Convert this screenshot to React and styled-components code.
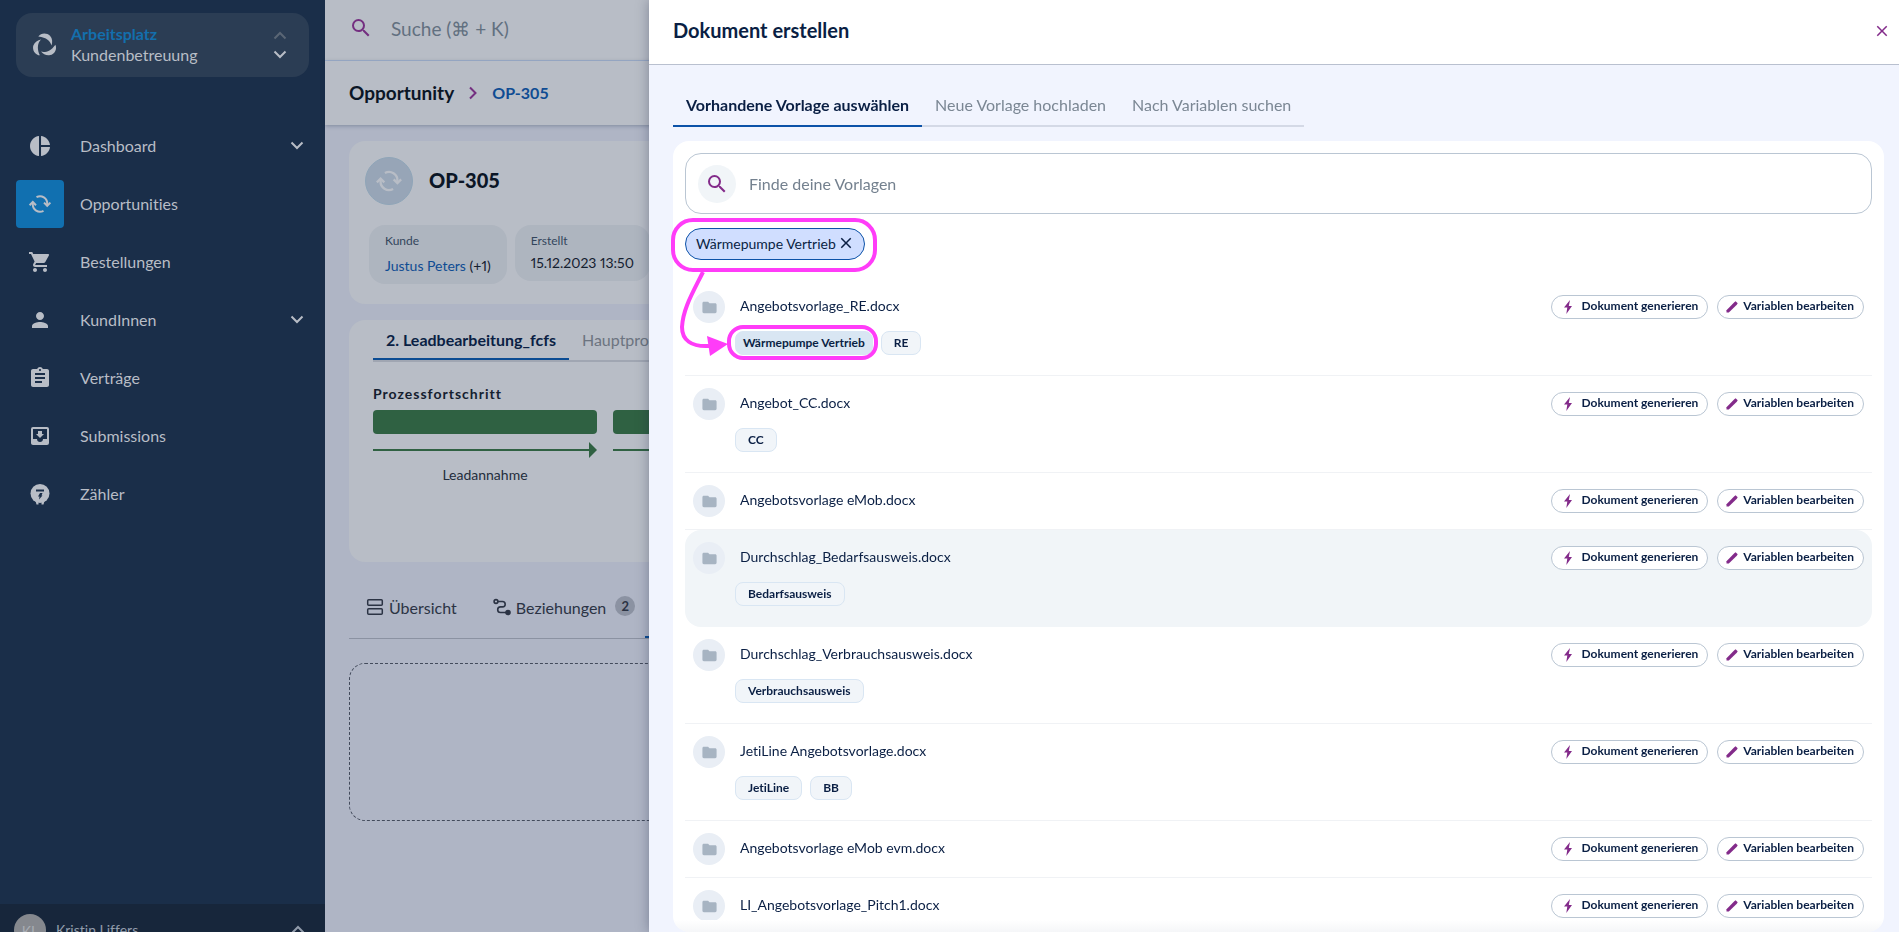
import React, { useState } from "react";
import styled, { createGlobalStyle, css } from "styled-components";
import {
  MdPieChart,
  MdShoppingCart,
  MdPerson,
  MdAssignment,
  MdSearch,
  MdFolder,
  MdClose,
} from "react-icons/md";

const GlobalStyle = createGlobalStyle`
  * {
    box-sizing: border-box;
  }

  body {
    margin: 0;
    overflow: hidden;
    font-family: Lato, "Open Sans", sans-serif;
    font-size: 16px;
    font-variant-ligatures: none;
    color: #0a1f44;
    background: #afb5c5;
  }

  button,
  input {
    font-family: inherit;
    font-variant-ligatures: inherit;
    color: inherit;
  }

  a {
    text-decoration: none;
  }
`;

const navItems = [
  { label: "Dashboard", icon: <MdPieChart />, more: true },
  { label: "Opportunities", icon: <CycleIcon size={24} />, active: true },
  { label: "Bestellungen", icon: <MdShoppingCart /> },
  { label: "KundInnen", icon: <MdPerson />, more: true },
  { label: "Verträge", icon: <MdAssignment /> },
  { label: "Submissions", icon: <InboxIcon /> },
  { label: "Zähler", icon: <MeterIcon /> },
];

const templates = [
  { name: "Angebotsvorlage_RE.docx", tags: ["Wärmepumpe Vertrieb", "RE"] },
  { name: "Angebot_CC.docx", tags: ["CC"] },
  { name: "Angebotsvorlage eMob.docx", tags: [] },
  { name: "Durchschlag_Bedarfsausweis.docx", tags: ["Bedarfsausweis"], hovered: true },
  { name: "Durchschlag_Verbrauchsausweis.docx", tags: ["Verbrauchsausweis"] },
  { name: "JetiLine Angebotsvorlage.docx", tags: ["JetiLine", "BB"] },
  { name: "Angebotsvorlage eMob evm.docx", tags: [] },
  { name: "LI_Angebotsvorlage_Pitch1.docx", tags: [] },
];

const drawerTabs = ["Vorhandene Vorlage auswählen", "Neue Vorlage hochladen", "Nach Variablen suchen"];

const activeFilter = "Wärmepumpe Vertrieb";

function CycleIcon({ size }) {
  return (
    <svg width={size} height={size} viewBox="0 0 24 24" fill="none" stroke="currentColor" strokeWidth="2">
      <path d="M8.5 5.2A7.2 7.2 0 0 1 19.2 12v1.2" />
      <path d="M15.5 18.8A7.2 7.2 0 0 1 4.8 12v-1.2" />
      <path d="M16 10.6l3.2 3.2 3.2-3.2" />
      <path d="M1.6 13.2L4.8 10l3.2 3.2" />
    </svg>
  );
}

function InboxIcon() {
  return (
    <svg width="24" height="24" viewBox="0 0 24 24" fill="currentColor">
      <path d="M19 3H5a2 2 0 0 0-2 2v14c0 1.1.9 2 2 2h14a2 2 0 0 0 2-2V5a2 2 0 0 0-2-2zm0 12h-4c0 1.700-1.300 3-3 3s-3-1.300-3-3H5V5h14v10zm-3-5h-2V7h-4v3H8l4 4 4-4z" />
    </svg>
  );
}

function MeterIcon() {
  return (
    <svg width="24" height="24" viewBox="0 0 24 24">
      <circle cx="12" cy="11.5" r="9.5" fill="currentColor" />
      <path d="M7.5 19h3v3.500h-2zM13.500 19h3l-1 3.500h-2z" fill="currentColor" />
      <path d="M8 7.500h8v2H8zM12 11h2.500l-1 2.500h1L11 17.500l.5-3H10z" fill="#1a2e49" />
    </svg>
  );
}

const blade = "M6.300 4.500C9 .5 15 .5 18 3.800c2.600 3 2.600 6.500 1.500 9.700C18.500 9.500 14.500 5.200 6.300 4.500z";

function LogoIcon() {
  return (
    <svg width="26" height="26" viewBox="0 0 26 26" fill="currentColor">
      {[0, 120, 240].map((angle) => (
        <path key={angle} d={blade} transform={`rotate(${angle} 12.500 13.500)`} />
      ))}
    </svg>
  );
}

function Chevron({ dir = "down" }) {
  const paths = { down: "M1.500 3.500L7 9l5.500-5.500", up: "M1.500 9.500L7 4l5.500 5.500", right: "M4 1.500L9.500 7 4 12.500" };
  return (
    <svg width="14" height="14" viewBox="0 0 14 14" fill="none" stroke="currentColor" strokeWidth="2">
      <path d={paths[dir]} />
    </svg>
  );
}

function BoltIcon() {
  return (
    <svg width="16" height="16" viewBox="0 0 16 16" fill="currentColor">
      <path d="M10 1L4 8.600h3.300L6.300 15 12 7H8.800z" />
    </svg>
  );
}

function PencilIcon() {
  return (
    <svg width="12" height="12" viewBox="0 0 12 12" fill="currentColor">
      <path d="M.5 9.200L8.300 1.200 9.600.3 11.700 2.300 10.800 3.700 2.800 11.500H.5z" />
    </svg>
  );
}

function OverviewIcon() {
  return (
    <svg width="18" height="18" viewBox="0 0 18 18" fill="none" stroke="currentColor" strokeWidth="1.5">
      <rect x="1.7" y="1.7" width="14.6" height="5.6" rx="1" />
      <rect x="1.7" y="10.7" width="14.6" height="5.6" rx="1" />
    </svg>
  );
}

function RelationIcon() {
  return (
    <svg width="18" height="18" viewBox="0 0 18 18" fill="none" stroke="currentColor" strokeWidth="1.6">
      <circle cx="3" cy="3.5" r="1.9" />
      <path d="M5 3.500h4.500a2.700 2.700 0 0 1 0 5.400H7.500a2.800 2.800 0 0 0 0 5.600H13" />
      <circle cx="15" cy="14.5" r="2" fill="currentColor" />
    </svg>
  );
}

function Sidebar() {
  return (
    <SidebarContainer>
      <Workspace type="button">
        <LogoIcon />
        <WorkspaceText>
          <strong>Arbeitsplatz</strong>
          <span>Kundenbetreuung</span>
        </WorkspaceText>
        <WorkspaceArrows>
          <Chevron dir="up" />
          <Chevron />
        </WorkspaceArrows>
      </Workspace>
      <Nav>
        {navItems.map((item) => (
          <NavLink href="#" key={item.label}>
            <NavIcon $active={item.active}>{item.icon}</NavIcon>
            <NavLabel>{item.label}</NavLabel>
            {item.more && <Chevron />}
          </NavLink>
        ))}
      </Nav>
      <UserBar type="button">
        <Avatar>KL</Avatar>
        <NavLabel>Kristin Liffers</NavLabel>
        <Chevron dir="up" />
      </UserBar>
    </SidebarContainer>
  );
}

function Opportunity() {
  return (
    <Main>
      <TopBar>
        <MdSearch />
        <TopSearch type="search" aria-label="Suche" placeholder="Suche (⌘ + K)" />
      </TopBar>
      <Breadcrumb>
        <h1>Opportunity</h1>
        <Chevron dir="right" />
        <a href="#">OP-305</a>
      </Breadcrumb>
      <Content>
        <Card>
          <OpportunityHead>
            <OpportunityIcon>
              <CycleIcon size={28} />
            </OpportunityIcon>
            <h2>OP-305</h2>
          </OpportunityHead>
          <Facts>
            <Fact>
              <small>Kunde</small>
              <FactValue $tall>
                <a href="#">Justus Peters</a> (+1)
              </FactValue>
            </Fact>
            <Fact>
              <small>Erstellt</small>
              <FactValue>15.12.2023 13:50</FactValue>
            </Fact>
          </Facts>
        </Card>
        <ProcessCard>
          <ProcessTabs>
            <ProcessTab type="button" $active>2. Leadbearbeitung_fcfs</ProcessTab>
            <ProcessTab type="button">Hauptprozess</ProcessTab>
          </ProcessTabs>
          <h3>Prozessfortschritt</h3>
          <Steps>
            {["Leadannahme", "Qualifizierung"].map((step) => (
              <Step key={step}>
                <StepBar />
                <StepArrow />
                <span>{step}</span>
              </Step>
            ))}
          </Steps>
        </ProcessCard>
        <SectionTabs>
          <SectionTab type="button">
            <OverviewIcon /> Übersicht
          </SectionTab>
          <SectionTab type="button">
            <RelationIcon /> Beziehungen <Count>2</Count>
          </SectionTab>
          <SectionTab type="button" $active>Dokumente</SectionTab>
        </SectionTabs>
        <DropZone />
      </Content>
    </Main>
  );
}

function TemplateRow({ template }) {
  return (
    <Row $hovered={template.hovered}>
      <FolderCircle>
        <MdFolder />
      </FolderCircle>
      <RowBody>
        <FileName>{template.name}</FileName>
        {template.tags.length > 0 && (
          <Tags>
            {template.tags.map((tag) => (
              <Tag key={tag} $match={tag === activeFilter}>{tag}</Tag>
            ))}
          </Tags>
        )}
      </RowBody>
      <Actions>
        <PillButton type="button">
          <BoltIcon />
          <span>Dokument generieren</span>
        </PillButton>
        <PillButton type="button">
          <PencilIcon />
          <span>Variablen bearbeiten</span>
        </PillButton>
      </Actions>
    </Row>
  );
}

function DocumentDrawer() {
  const [tab, setTab] = useState(drawerTabs[0]);
  const [query, setQuery] = useState("");

  const visible = templates.filter((t) => t.name.toLowerCase().includes(query.toLowerCase()));

  return (
    <Drawer>
      <DrawerHeader>
        <h2>Dokument erstellen</h2>
        <CloseButton type="button" aria-label="Schließen">
          <MdClose />
        </CloseButton>
      </DrawerHeader>
      <DrawerBody>
        <DrawerTabs>
          {drawerTabs.map((name) => (
            <DrawerTab type="button" key={name} $active={name === tab} onClick={() => setTab(name)}>
              {name}
            </DrawerTab>
          ))}
        </DrawerTabs>
        <Panel>
          <SearchBox>
            <SearchCircle>
              <MdSearch />
            </SearchCircle>
            <input
              type="text"
              aria-label="Finde deine Vorlagen"
              placeholder="Finde deine Vorlagen"
              value={query}
              onChange={(e) => setQuery(e.target.value)}
            />
          </SearchBox>
          <FilterBar>
            <FilterChip type="button">
              {activeFilter}
              <MdClose />
            </FilterChip>
            <HintArrow viewBox="0 0 60 90">
              <path d="M33 2C22 24 13 39 12 57c0 13 9 20 27 19" fill="none" stroke="#ff3cf8" strokeWidth="4" />
              <path d="M37 66l21 8-18 12z" fill="#ff3cf8" />
            </HintArrow>
          </FilterBar>
          <List>
            {visible.map((template) => (
              <TemplateRow key={template.name} template={template} />
            ))}
          </List>
        </Panel>
      </DrawerBody>
    </Drawer>
  );
}

const App = () => (
  <Page>
    <GlobalStyle />
    <Sidebar />
    <Opportunity />
    <DocumentDrawer />
  </Page>
);

export default App;

const Page = styled.div`
  display: flex;
  height: 100vh;
  overflow: hidden;
`;

const SidebarContainer = styled.aside`
  display: flex;
  flex-direction: column;
  flex: 0 0 325px;
  height: calc(100vh + 24px);
  background: #1a2e49;
  color: #b8bdc6;
`;

const Workspace = styled.button`
  display: flex;
  align-items: center;
  gap: 13px;
  height: 64px;
  margin: 13px 16px 45px;
  padding: 0 22px 0 16px;
  border: none;
  border-radius: 16px;
  background: #2b3d54;
  font-size: 16px;
  text-align: left;
`;

const WorkspaceText = styled.span`
  display: flex;
  flex-direction: column;
  flex: 1;
  padding-bottom: 3px;
  line-height: 21px;

  strong {
    color: #136fad;
  }
`;

const WorkspaceArrows = styled.span`
  display: flex;
  flex-direction: column;
  gap: 5px;

  svg:first-child {
    color: #5a6675;
  }
`;

const Nav = styled.nav`
  display: flex;
  flex-direction: column;
  flex: 1;
  gap: 10px;
  padding: 0 16px;
`;

const NavLink = styled.a`
  display: flex;
  align-items: center;
  gap: 16px;
  padding-right: 5px;
  color: inherit;
`;

const NavIcon = styled.span`
  display: grid;
  place-items: center;
  width: 48px;
  height: 48px;
  border-radius: 4px;
  font-size: 24px;
  background: ${({ $active }) => ($active ? "#1170b0" : "transparent")};
`;

const NavLabel = styled.span`
  flex: 1;
  padding-bottom: 2px;
`;

const UserBar = styled.button`
  display: flex;
  align-items: center;
  gap: 10px;
  height: 52px;
  padding: 0 20px 0 14px;
  border: none;
  background: #17263b;
  color: #929cab;
  font-size: 14px;
  text-align: left;
`;

const Avatar = styled.span`
  display: grid;
  place-items: center;
  width: 32px;
  height: 32px;
  border-radius: 50%;
  background: #85888e;
  color: #a9adb4;
`;

const Main = styled.main`
  flex: 1;
  min-width: 0;
  background: #afb5c5;
`;

const TopBar = styled.div`
  display: flex;
  align-items: center;
  gap: 16px;
  height: 61px;
  padding: 0 24px 4px;
  border-bottom: 1px solid #9fb0cb;
  background: #b8bdc6;
  color: #742f80;
  font-size: 24px;
`;

const TopSearch = styled.input`
  flex: 1;
  border: none;
  background: transparent;
  font-size: 19px;

  &::placeholder {
    color: #627080;
  }
`;

const Breadcrumb = styled.div`
  display: flex;
  align-items: center;
  gap: 12px;
  height: 64px;
  padding: 0 24px;
  background: #b8bdc6;
  box-shadow: 0 1px 4px rgba(20, 40, 70, 0.3);
  color: #742f80;

  h1 {
    margin: 0;
    padding-bottom: 2px;
    color: #0b1626;
    font-size: 19px;
  }

  a {
    padding-bottom: 2px;
    color: #0f4c93;
    font-weight: 700;
  }
`;

const Content = styled.div`
  display: flex;
  flex-direction: column;
  padding: 16px 24px;
`;

const Card = styled.section`
  margin-bottom: 16px;
  padding: 16px 16px 20px;
  border-radius: 16px;
  background: #b8bdc6;
`;

const OpportunityHead = styled.div`
  display: flex;
  align-items: center;
  gap: 16px;
  margin-bottom: 20px;

  h2 {
    margin: 0;
    padding-bottom: 2px;
    color: #0b1626;
    font-size: 20px;
    font-weight: 900;
  }
`;

const OpportunityIcon = styled.span`
  display: grid;
  place-items: center;
  width: 48px;
  height: 48px;
  border: 1px solid #8fa5b8;
  border-radius: 50%;
  background: #97a5b7;
  color: #b8bdc6;
`;

const Facts = styled.div`
  display: flex;
  align-items: flex-start;
  gap: 8px;
  padding-left: 4px;
`;

const Fact = styled.div`
  padding: 8px 16px;
  border-radius: 16px;
  background: #aeb5bf;
  white-space: nowrap;

  small {
    display: block;
    color: #33455c;
    font-size: 12px;
    line-height: 16px;
  }
`;

const FactValue = styled.div`
  padding-top: ${({ $tall }) => ($tall ? "7px" : "4px")};
  color: #14202f;
  font-size: 14px;
  font-variant-numeric: proportional-nums;
  line-height: 20px;

  a {
    color: #0f4c93;
  }
`;

const ProcessCard = styled(Card)`
  min-height: 242px;
  margin-bottom: 24px;
  padding: 0 24px;

  h3 {
    margin: 22px 0 6px;
    color: #14202f;
    font-size: 14px;
    line-height: 20px;
    letter-spacing: 1px;
  }
`;

const ProcessTabs = styled.div`
  display: flex;
  height: 42px;
  border-bottom: 2px solid #a0a6b2;
`;

const ProcessTab = styled.button`
  height: 40px;
  padding: 0 13px;
  border: none;
  border-bottom: 2px solid ${({ $active }) => ($active ? "#0b4c93" : "transparent")};
  background: transparent;
  color: ${({ $active }) => ($active ? "#0a1f44" : "#6c7480")};
  font-size: 16px;
  font-weight: ${({ $active }) => ($active ? 700 : 400)};
  white-space: nowrap;
`;

const Steps = styled.div`
  display: flex;
  gap: 16px;
`;

const Step = styled.div`
  display: flex;
  flex-direction: column;
  flex: 0 0 224px;
  color: #232d3c;
  font-size: 14px;
  line-height: 18px;
  text-align: center;
`;

const StepBar = styled.div`
  height: 24px;
  border-radius: 4px;
  background: #2f6142;
`;

const StepArrow = styled.div`
  display: flex;
  align-items: center;
  height: 16px;
  margin: 8px 0;

  &::before {
    content: "";
    flex: 1;
    height: 2px;
    background: #2f6142;
  }

  &::after {
    content: "";
    border: 8px solid transparent;
    border-right: none;
    border-left-color: #2f6142;
  }
`;

const SectionTabs = styled.div`
  display: flex;
  height: 53px;
  margin-bottom: 24px;
  border-bottom: 1px solid #8b92a2;
`;

const SectionTab = styled.button`
  display: flex;
  align-items: center;
  gap: 5px;
  height: 52px;
  padding: 0 19px 8px 17px;
  border: none;
  border-bottom: 2px solid ${({ $active }) => ($active ? "#0b4c93" : "transparent")};
  background: transparent;
  color: #2b3344;
  font-size: 16px;
`;

const Count = styled.span`
  display: grid;
  place-items: center;
  width: 20px;
  height: 20px;
  margin: 0 -9px 2px 4px;
  border-radius: 50%;
  background: #8b92a2;
  font-size: 13px;
  font-weight: 700;
`;

const DropZone = styled.div`
  height: 158px;
  border: 1px dashed #434b5c;
  border-radius: 16px;
`;

const Drawer = styled.div`
  position: fixed;
  inset: 0 0 0 649px;
  display: flex;
  flex-direction: column;
  background: #f1f4fe;
  box-shadow: 0 0 12px rgba(20, 30, 60, 0.35);
`;

const DrawerHeader = styled.header`
  display: flex;
  align-items: center;
  justify-content: space-between;
  flex: 0 0 65px;
  padding: 0 8px 3px 24px;
  border-bottom: 1px solid #b9c0cf;
  background: #fff;

  h2 {
    margin: 0;
    padding-bottom: 2px;
    font-size: 20px;
    font-weight: 700;
  }
`;

const CloseButton = styled.button`
  display: grid;
  padding: 0;
  border: none;
  background: transparent;
  color: #832b8a;
  font-size: 18px;
`;

const DrawerBody = styled.div`
  display: flex;
  flex: 1;
  flex-direction: column;
  min-height: 0;
  padding: 20px 15px 0 24px;
`;

const DrawerTabs = styled.div`
  display: flex;
  width: fit-content;
  margin-bottom: 14px;
`;

const DrawerTab = styled.button`
  height: 42px;
  padding: 0 13px 2px;
  border: none;
  border-bottom: 2px solid ${({ $active }) => ($active ? "#0c52a8" : "#d4d9e6")};
  background: transparent;
  color: ${({ $active }) => ($active ? "#0a1f44" : "#7b8794")};
  font-size: 16px;
  font-weight: ${({ $active }) => ($active ? 700 : 400)};
`;

const Panel = styled.section`
  display: flex;
  flex: 1;
  flex-direction: column;
  min-height: 0;
  padding: 12px;
  border-radius: 16px;
  background: linear-gradient(to top, #f5f6f8, #fff 12px);
`;

const SearchBox = styled.div`
  display: flex;
  align-items: center;
  flex: none;
  gap: 13px;
  height: 61px;
  padding: 0 12px;
  border: 1px solid #bac6d3;
  border-radius: 16px;

  input {
    flex: 1;
    padding: 0;
    border: none;
    outline: none;
    background: transparent;
    font-size: 16px;
  }

  input::placeholder {
    color: #74818f;
  }
`;

const SearchCircle = styled.span`
  display: grid;
  place-items: center;
  width: 38px;
  height: 38px;
  border-radius: 50%;
  background: #f1f5f8;
  color: #832b8a;
  font-size: 24px;
`;

const FilterBar = styled.div`
  position: relative;
  display: flex;
  padding: 14px 0 19px;
`;

const ring = css`
  position: relative;

  &::after {
    content: "";
    position: absolute;
    border: 4px solid #ff3cf8;
  }
`;

const FilterChip = styled.button`
  ${ring}
  display: flex;
  align-items: center;
  gap: 1px;
  height: 32px;
  padding: 0 9px 2px 10px;
  border: 1px solid #0c52a8;
  border-radius: 16px;
  background: #d0deff;
  font-size: 14px;

  svg {
    font-size: 18px;
  }

  &::after {
    inset: -11px -13px -13px -15px;
    border-radius: 22px;
  }
`;

const HintArrow = styled.svg`
  position: absolute;
  top: 56px;
  left: -15px;
  z-index: 1;
  width: 60px;
  height: 90px;
`;

const List = styled.ul`
  flex: 1;
  min-height: 0;
  margin: 0;
  padding: 0;
  overflow-y: auto;
  scrollbar-width: none;
  list-style: none;
`;

const Row = styled.li`
  display: flex;
  align-items: flex-start;
  padding: 12px 8px;
  border-bottom: 1px solid #f0f2f5;

  ${({ $hovered }) =>
    $hovered &&
    css`
      border-color: transparent;
      border-radius: 16px;
      background: #f1f5f8;
    `}
`;

const FolderCircle = styled.span`
  display: grid;
  place-items: center;
  width: 32px;
  height: 32px;
  margin-right: 10px;
  border-radius: 50%;
  background: #e9eef5;
  color: #a7b4c2;
  font-size: 17px;
`;

const RowBody = styled.div`
  flex: 1;
`;

const FileName = styled.div`
  padding: 0 0 2px 5px;
  font-size: 14px;
  line-height: 30px;
`;

const Tags = styled.div`
  display: flex;
  gap: 8px;
  padding: 8px 0;
`;

const Tag = styled.span`
  display: flex;
  align-items: center;
  height: 24px;
  padding: 0 12px 2px;
  border: 1px solid #d9e6f3;
  border-radius: 8px;
  background: #f1f5f9;
  font-size: 12px;
  font-weight: 700;

  ${({ $match }) =>
    $match &&
    css`
      ${ring}
      padding: 0 7px 2px;
      background: #d9e6f3;

      &::after {
        inset: -7px -6px -6px -9px;
        border-radius: 16px;
      }
    `}
`;

const Actions = styled.div`
  display: flex;
  gap: 9px;
  padding-top: 4px;
`;

const PillButton = styled.button`
  display: flex;
  align-items: center;
  gap: 5px;
  height: 24px;
  padding: 0 9px 0 8px;
  border: 1px solid #bac6d3;
  border-radius: 12px;
  background: #fff;
  font-size: 12px;
  font-weight: 700;

  svg {
    flex: none;
    color: #832b8a;
  }

  span {
    padding-bottom: 3px;
  }
`;
